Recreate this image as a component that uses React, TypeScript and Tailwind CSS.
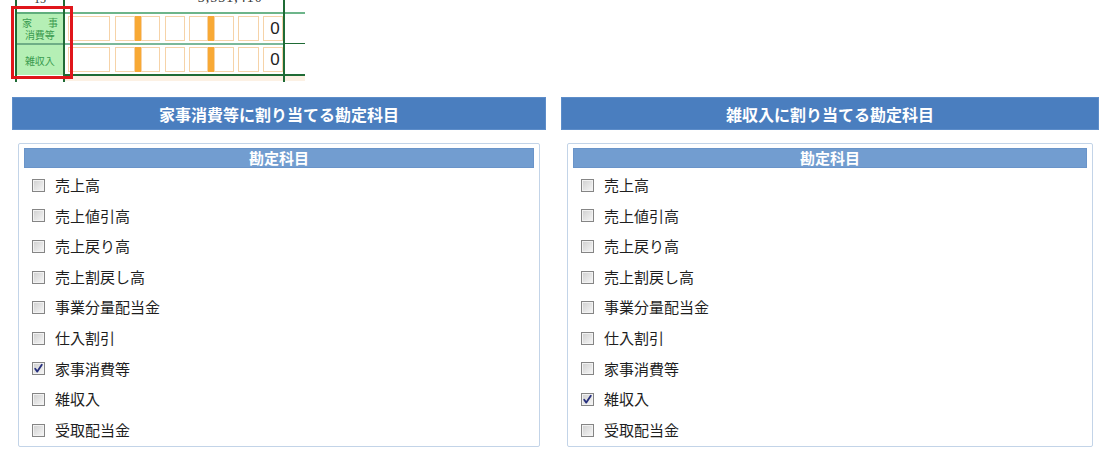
import React from "react";

const ACCOUNTS = [
  "売上高",
  "売上値引高",
  "売上戻り高",
  "売上割戻し高",
  "事業分量配当金",
  "仕入割引",
  "家事消費等",
  "雑収入",
  "受取配当金",
];

const FONT = { fontFamily: '"Noto Sans CJK JP", "Noto Sans", sans-serif' };

function CheckBox({ checked }: { checked: boolean }) {
  return (
    <span className="flex h-[13px] w-[13px] shrink-0 items-center justify-center border border-[#858585] bg-gradient-to-br from-[#cfcfcf] to-[#f7f7f7] shadow-[inset_0_0_0_1px_#f2f2f2]">
      {checked && (
        <svg viewBox="0 0 11 11" className="h-[11px] w-[11px]">
          <path d="M2.2 5.8 L4.3 8.6 L8.8 1.8" fill="none" stroke="#262f7d" strokeWidth="1.8" strokeLinecap="round" strokeLinejoin="round" />
        </svg>
      )}
    </span>
  );
}

function AccountPanel({ title, checked }: { title: string; checked: string }) {
  return (
    <div className="flex flex-col">
      <div className="flex h-[33px] items-center justify-center border border-[#5d8dc9] bg-[#4a7ebf] text-[16px] font-bold text-white">
        {title}
      </div>
      <div className="mx-[6px] mt-[13px] flex flex-col rounded-[2px] border border-[#c3d4e8] px-[5px] pb-[1px] pt-[4px]">
        <div className="flex h-[20px] items-center justify-center border border-[#6a94c9] bg-[#729dd0] text-[15px] font-bold text-white">
          勘定科目
        </div>
        <div className="mt-[2px] flex flex-col">
          {ACCOUNTS.map((a) => (
            <div key={a} className="flex h-[30.6px] items-center gap-[10px] pl-[8px] text-[15px] text-[#1e1e1e]">
              <CheckBox checked={a === checked} />
              <span>{a}</span>
            </div>
          ))}
        </div>
      </div>
    </div>
  );
}

function DigitCells({ value }: { value: string }) {
  return (
    <div className="flex h-[25px] items-stretch pl-[3px]">
      <div className="w-[42px] border border-[#f6d3a8]" />
      <div className="ml-[5px] w-[20px] border border-[#f6d3a8]" />
      <div className="w-[6px] bg-[#f8a935]" />
      <div className="w-[19px] border border-[#f6d3a8]" />
      <div className="ml-[5px] w-[20px] border border-[#f6d3a8]" />
      <div className="ml-[4px] w-[19px] border border-[#f6d3a8]" />
      <div className="w-[6px] bg-[#f8a935]" />
      <div className="w-[20px] border border-[#f6d3a8]" />
      <div className="ml-[4px] w-[21px] border border-[#f6d3a8]" />
      <div className="ml-[4px] flex w-[20px] items-center justify-end border border-[#f6d3a8] pr-[2px] text-[17px] leading-none text-[#222]" style={{ fontFamily: '"Liberation Sans", Arial, sans-serif' }}>
        {value}
      </div>
    </div>
  );
}

function FormSnippet() {
  return (
    <div className="relative flex h-[82px] w-[305px] bg-white" style={FONT}>
      {/* column: far left */}
      <div className="flex w-[17px] flex-col border-r-2 border-[#1f6b35]">
        <div className="h-[12px]" />
        <div className="flex-1" />
      </div>
      {/* column: label */}
      <div className="flex w-[48px] flex-col border-r-2 border-[#1f6b35]">
        <div className="h-[12px] overflow-hidden text-[12px] leading-[12px] text-[#333]">
          <div className="-mt-[7px] pl-[17px]" style={{ fontFamily: '"Liberation Serif", serif' }}>15</div>
        </div>
        <div className="flex h-[31px] flex-col items-center justify-center border-t-2 border-[#5fae7d] bg-[#b5efb5] text-[10px] text-[#3b9b50]">
          <div className="flex h-[12px] w-[36px] items-center justify-between leading-[12px]">
            <span>家</span>
            <span>事</span>
          </div>
          <div className="h-[12px] leading-[12px]">消費等</div>
        </div>
        <div className="flex h-[32px] items-center justify-center border-t-2 border-[#6fae86] bg-[#b5efb5] text-[10px] text-[#3b9b50]">
          雑収入
        </div>
        <div className="flex-1" />
      </div>
      {/* column: digits */}
      <div className="flex w-[221px] flex-col border-r-2 border-[#1f6b35]">
        <div className="h-[12px] overflow-hidden text-[14px] leading-[14px] text-[#333]" style={{ fontFamily: '"Liberation Serif", serif' }}>
          <div className="-mt-[9px] pl-[133px] tracking-[1px]">3,531,410</div>
        </div>
        <div className="flex h-[31px] flex-col justify-center border-t-2 border-[#6db58a]">
          <DigitCells value="0" />
        </div>
        <div className="flex h-[31px] flex-col justify-center border-t-2 border-[#7bb89a]">
          <DigitCells value="0" />
        </div>
        <div className="h-[7px] border-t-2 border-[#1f6b35] bg-[#fcf1e4]" />
      </div>
      {/* column: right */}
      <div className="flex w-[20px] flex-col">
        <div className="h-[12px]" />
        <div className="h-[31px] border-t-2 border-[#6db58a]" />
        <div className="h-[31px] border-t border-[#1f6b35]" />
        <div className="h-[7px] border-t-2 border-[#1f6b35] bg-[#fcf1e4]" />
      </div>
      {/* red highlight over label column */}
      <div className="pointer-events-none absolute left-[11px] top-[6px] h-[73px] w-[62px] border-[3px] border-[#e0161b]" />
    </div>
  );
}

export default function App() {
  return (
    <div className="h-[472px] w-[1111px] overflow-hidden bg-white" style={FONT}>
      <FormSnippet />
      <div className="mt-[15px] grid grid-cols-[534px_538px] gap-[15px] pl-[12px]">
        <AccountPanel title="家事消費等に割り当てる勘定科目" checked="家事消費等" />
        <AccountPanel title="雑収入に割り当てる勘定科目" checked="雑収入" />
      </div>
    </div>
  );
}
